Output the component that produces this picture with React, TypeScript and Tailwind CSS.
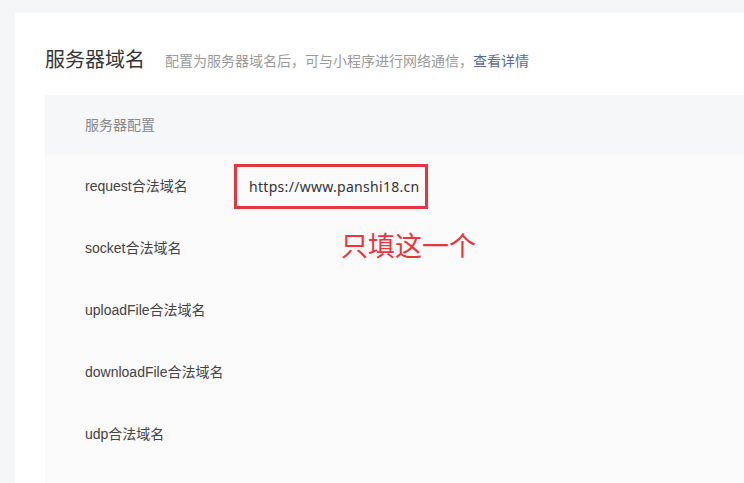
const rows = [
  "request合法域名",
  "socket合法域名",
  "uploadFile合法域名",
  "downloadFile合法域名",
  "udp合法域名",
];

export default function App() {
  return (
    <div
      className="h-[483px] w-[744px] overflow-hidden bg-[#f4f5f7] pl-[15px] pt-[13px]"
      style={{ fontFamily: '"Liberation Sans", "Noto Sans CJK SC", sans-serif' }}
    >
      <div className="h-[600px] bg-white pl-[30px] pt-[32px]">
        <div className="flex h-[30px] items-center">
          <h2 className="text-[20px] leading-[30px] text-[#353535]">服务器域名</h2>
          <p className="ml-[20px] mt-[3px] text-[14px] text-[#9a9a9a]">
            配置为服务器域名后，可与小程序进行网络通信，
            <a className="text-[#576b95]">查看详情</a>
          </p>
        </div>
        <div className="mt-[20px] h-[420px] bg-[#fafafa]">
          <div className="flex h-[60px] items-center bg-[#f6f7f9] pl-[40px] text-[14px] text-[#888]">
            服务器配置
          </div>
          {rows.map((label, i) => (
            <div key={label} className="relative flex h-[62px] items-center pl-[40px] text-[14px] text-[#444]">
              <span className="w-[149px] shrink-0">{label}</span>
              {i === 0 && (
                <span className="flex h-[45px] w-[194px] items-center border-[3px] border-[#e3373d] pl-[12px] text-[#333]">
                  <span className="tracking-[0.3px]" style={{ fontFamily: '"Noto Sans", sans-serif' }}>
                    https://www.panshi18.cn
                  </span>
                </span>
              )}
              {i === 1 && (
                <span className="absolute left-[296px] top-[12px] text-[27px] leading-[36px] text-[#e8373c]">
                  只填这一个
                </span>
              )}
            </div>
          ))}
        </div>
      </div>
    </div>
  );
}
